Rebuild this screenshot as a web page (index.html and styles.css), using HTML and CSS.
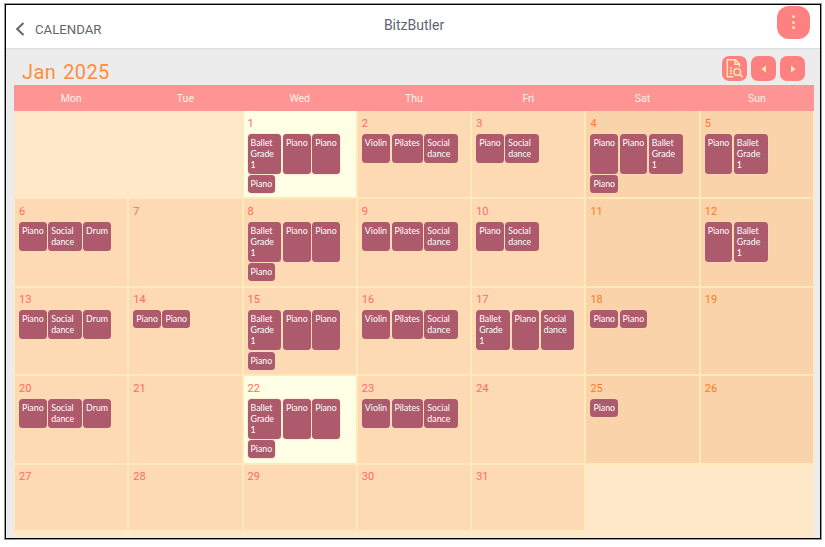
FILE: index.html
```html
<!DOCTYPE html>
<html lang="en">
<head>
<meta charset="utf-8">
<title>BitzButler</title>
<link rel="stylesheet" href="styles.css">
</head>
<body>
<div class="frame">
  <header class="topbar">
    <div class="back">
      <svg class="chevron" width="10" height="14" viewBox="0 0 10 14"><path d="M8.5 1 L2.2 7 L8.5 13" fill="none" stroke="#5f6670" stroke-width="2"/></svg>
      <span>CALENDAR</span>
    </div>
    <div class="brand">BitzButler</div>
    <button class="menu" type="button" aria-label="menu"><i></i><i></i><i></i></button>
  </header>
  <main class="content">
    <div class="toolbar">
      <h1 class="month"><span>Jan</span><span>2025</span></h1>
      <div class="tools">
        <button class="tool" type="button" aria-label="report">
          <svg width="21" height="21" viewBox="0 0 19 19" fill="none" stroke="#ffeeb0" stroke-width="1.3"><path d="M8.5 17H3V1.5h7.2l3.8 4v2.5"/><path d="M10 1.5v4.2h4"/><path d="M5.3 9h2M5.3 11.5h2M5.3 14h2"/><circle cx="12" cy="12.6" r="3"/><path d="M14.2 14.8l2.6 2.6"/></svg>
        </button>
        <button class="tool" type="button" aria-label="previous"><svg width="8" height="10" viewBox="0 0 8 10"><path d="M6 1.5v7L1.5 5z" fill="#ffeeb0"/></svg></button>
        <button class="tool" type="button" aria-label="next"><svg width="8" height="10" viewBox="0 0 8 10"><path d="M2 1.5v7L6.5 5z" fill="#ffeeb0"/></svg></button>
      </div>
    </div>
    <div class="weekdays"><span>Mon</span><span>Tue</span><span>Wed</span><span>Thu</span><span>Fri</span><span>Sat</span><span>Sun</span></div>
    <div class="grid">
      <div class="cell blank"></div>
      <div class="cell blank"></div>
      <div class="cell today"><b>1</b><div class="chips"><span class="wrap">Ballet Grade 1</span><span>Piano</span><span>Piano</span><span>Piano</span></div></div>
      <div class="cell"><b>2</b><div class="chips"><span>Violin</span><span>Pilates</span><span class="wrap">Social dance</span></div></div>
      <div class="cell"><b>3</b><div class="chips"><span>Piano</span><span class="wrap">Social dance</span></div></div>
      <div class="cell end"><b>4</b><div class="chips"><span>Piano</span><span>Piano</span><span class="wrap">Ballet Grade 1</span><span>Piano</span></div></div>
      <div class="cell end"><b>5</b><div class="chips"><span>Piano</span><span class="wrap">Ballet Grade 1</span></div></div>

      <div class="cell"><b>6</b><div class="chips"><span>Piano</span><span class="wrap">Social dance</span><span>Drum</span></div></div>
      <div class="cell"><b>7</b></div>
      <div class="cell"><b>8</b><div class="chips"><span class="wrap">Ballet Grade 1</span><span>Piano</span><span>Piano</span><span>Piano</span></div></div>
      <div class="cell"><b>9</b><div class="chips"><span>Violin</span><span>Pilates</span><span class="wrap">Social dance</span></div></div>
      <div class="cell"><b>10</b><div class="chips"><span>Piano</span><span class="wrap">Social dance</span></div></div>
      <div class="cell end"><b>11</b></div>
      <div class="cell end"><b>12</b><div class="chips"><span>Piano</span><span class="wrap">Ballet Grade 1</span></div></div>

      <div class="cell"><b>13</b><div class="chips"><span>Piano</span><span class="wrap">Social dance</span><span>Drum</span></div></div>
      <div class="cell"><b>14</b><div class="chips"><span>Piano</span><span>Piano</span></div></div>
      <div class="cell"><b>15</b><div class="chips"><span class="wrap">Ballet Grade 1</span><span>Piano</span><span>Piano</span><span>Piano</span></div></div>
      <div class="cell"><b>16</b><div class="chips"><span>Violin</span><span>Pilates</span><span class="wrap">Social dance</span></div></div>
      <div class="cell"><b>17</b><div class="chips"><span class="wrap">Ballet Grade 1</span><span>Piano</span><span class="wrap">Social dance</span></div></div>
      <div class="cell end"><b>18</b><div class="chips"><span>Piano</span><span>Piano</span></div></div>
      <div class="cell end"><b>19</b></div>

      <div class="cell"><b>20</b><div class="chips"><span>Piano</span><span class="wrap">Social dance</span><span>Drum</span></div></div>
      <div class="cell"><b>21</b></div>
      <div class="cell today"><b>22</b><div class="chips"><span class="wrap">Ballet Grade 1</span><span>Piano</span><span>Piano</span><span>Piano</span></div></div>
      <div class="cell"><b>23</b><div class="chips"><span>Violin</span><span>Pilates</span><span class="wrap">Social dance</span></div></div>
      <div class="cell"><b>24</b></div>
      <div class="cell end"><b>25</b><div class="chips"><span>Piano</span></div></div>
      <div class="cell end"><b>26</b></div>

      <div class="cell"><b>27</b></div>
      <div class="cell"><b>28</b></div>
      <div class="cell"><b>29</b></div>
      <div class="cell"><b>30</b></div>
      <div class="cell"><b>31</b></div>
      <div class="cell blank"></div>
      <div class="cell blank"></div>
    </div>
  </main>
</div>
</body>
</html>
```
FILE: styles.css
```css
* { box-sizing: border-box; }
html, body { margin: 0; height: 100%; background: #fff; }
body { padding: 5px 5px 9px 6px; font-family: Roboto, "Liberation Sans", sans-serif; }
.frame {
  width: 814px;
  height: 533px;
  outline: 1px solid #000;
  box-shadow: 0 0 0 2px #999;
  display: flex;
  flex-direction: column;
  background: #ececec;
  overflow: hidden;
}
.topbar {
  position: relative;
  height: 44px;
  flex: none;
  background: #fff;
  border-bottom: 1px solid #d8dfe8;
  display: flex;
  align-items: center;
  justify-content: space-between;
  padding: 0 10px 9px 9px;
}
.back { display: flex; align-items: center; gap: 10px; padding-top: 14px; color: #5f6670; font-size: 13.2px; }
.brand { position: absolute; left: 2px; right: 0; top: 12px; text-align: center; color: #5f6670; font-size: 14px; }
.menu {
  width: 33px; height: 33px; border: 0; border-radius: 12px; background: #ff8080;
  display: flex; flex-direction: column; align-items: center; justify-content: center; gap: 2.4px; padding: 0;
}
.menu i { width: 3px; height: 3px; border-radius: 50%; background: #ffe9a8; }
.content { flex: 1; padding: 0 6px 1px 8px; display: flex; flex-direction: column; min-height: 0; }
.toolbar { height: 36px; flex: none; display: flex; justify-content: space-between; padding: 7px 9px 0 8px; }
.month { margin: 4px 0 0; display: flex; gap: 7px; font-size: 20px; font-weight: 400; line-height: 24px; color: #ff8c3f; letter-spacing: 0.4px; }
.tools { display: flex; gap: 4px; }
.tool {
  width: 25px; height: 25px; border: 0; border-radius: 7px; background: #ff8080; padding: 0;
  display: flex; align-items: center; justify-content: center;
}
.weekdays {
  height: 26px; flex: none; display: grid; grid-template-columns: repeat(7, 1fr);
  background: #ff9494; color: #fff3e6; font-size: 10.5px; align-items: center; text-align: center;
}
.grid {
  flex: 1; min-height: 0; background: #fee8c8;
  display: grid; grid-template-columns: repeat(7, 1fr);
  grid-template-rows: 88.4px 88.4px 88.4px 88.4px 67px;
  align-content: start;
}
.cell {
  background: #fedab4;
  border: 1px solid #ffeab8;
  border-top: 0;
  border-bottom-width: 2px;
  padding: 5.5px 0 0 4px;
  min-width: 0;
}
.cell b { display: block; font-weight: 400; font-size: 11px; line-height: 14px; color: #ff6b5e; }
.cell.end { background: #fbd3aa; }
.cell.end b { color: #ff7a1f; }
.cell.today { background: #ffffe6; }
.cell.blank { background: transparent; border: 0; }
.chips { display: flex; flex-wrap: wrap; gap: 1.5px; margin-top: 3px; padding-right: 4px; }
.chips span {
  width: min-content;
  background: #ac5a6c;
  color: #fff;
  font-family: Lato, Roboto, sans-serif;
  font-size: 8.8px;
  line-height: 11px;
  padding: 3px 3px 4px;
  border-radius: 3.5px;
  box-shadow: 0 0 0 0.5px #ffdcb8;
}
.chips .wrap { padding-right: 7.5px; }
```
